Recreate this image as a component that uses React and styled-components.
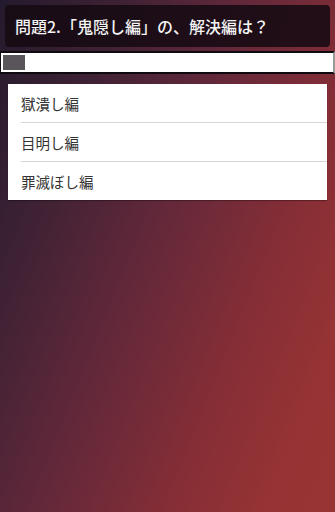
import React from "react";
import styled, { createGlobalStyle } from "styled-components";

const Global = createGlobalStyle`
  html, body { margin: 0; padding: 0; }
  body { font-family: "Noto Sans CJK JP", "Noto Sans", sans-serif; }
`;

const Screen = styled.div`
  width: 335px;
  min-height: 512px;
  box-sizing: border-box;
  display: flex;
  flex-direction: column;
  background: linear-gradient(112deg, #241a2d 0%, #3e2134 22%, #62283a 45%, #862e36 70%, #973334 88%, #993434 100%);
  overflow: hidden;
`;

const Header = styled.div`
  margin: 5px 5px 0 5px;
  height: 42px;
  border-radius: 4px;
  background: rgba(22, 10, 18, 0.88);
  display: flex;
  align-items: center;
  padding-left: 10px;
  color: #f4f4f4;
  font-size: 16px;
  font-weight: 500;
  letter-spacing: 0px;
`;

const Progress = styled.div`
  margin-top: 4px;
  height: 19px;
  background: #fff;
  border: 2px solid #0f0a0f;
  border-right-color: #9a9a9a;
  border-left-width: 1px;
  display: flex;
  align-items: center;
  padding: 0 2px;
`;

const ProgressFill = styled.div`
  height: 15px;
  background: #5a555a;
`;

const List = styled.ul`
  list-style: none;
  margin: 10px 8px 0 8px;
  padding: 0;
  background: #fff;
  box-shadow: 0 1px 1px rgba(0, 0, 0, 0.3);
`;

const Item = styled.li`
  height: 38px;
  margin-left: 13px;
  display: flex;
  align-items: center;
  font-size: 14.5px;
  color: #333;
  border-top: ${(p) => (p.$first ? "none" : "1px solid #d6d6d6")};
`;

const items = ["獄潰し編", "目明し編", "罪滅ぼし編"];

export default function App() {
  return (
    <>
      <Global />
      <Screen>
        <Header>問題2.「鬼隠し編」の、解決編は？</Header>
        <Progress>
          <ProgressFill style={{ width: "22px" }} />
        </Progress>
        <List>
          {items.map((t, i) => (
            <Item key={t} $first={i === 0}>
              {t}
            </Item>
          ))}
        </List>
      </Screen>
    </>
  );
}
